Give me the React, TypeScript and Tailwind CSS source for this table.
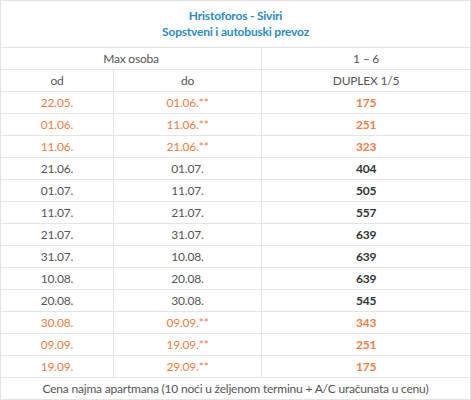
const rows: { od: string; doo: string; price: number; hot: boolean }[] = [
  { od: "22.05.", doo: "01.06.**", price: 175, hot: true },
  { od: "01.06.", doo: "11.06.**", price: 251, hot: true },
  { od: "11.06.", doo: "21.06.**", price: 323, hot: true },
  { od: "21.06.", doo: "01.07.", price: 404, hot: false },
  { od: "01.07.", doo: "11.07.", price: 505, hot: false },
  { od: "11.07.", doo: "21.07.", price: 557, hot: false },
  { od: "21.07.", doo: "31.07.", price: 639, hot: false },
  { od: "31.07.", doo: "10.08.", price: 639, hot: false },
  { od: "10.08.", doo: "20.08.", price: 639, hot: false },
  { od: "20.08.", doo: "30.08.", price: 545, hot: false },
  { od: "30.08.", doo: "09.09.**", price: 343, hot: true },
  { od: "09.09.", doo: "19.09.**", price: 251, hot: true },
  { od: "19.09.", doo: "29.09.**", price: 175, hot: true },
];

export default function App() {
  const cell = "border border-[#e4e4e4] h-[22px] p-0 text-center align-middle";

  return (
    <div className="bg-white font-['Lato','Liberation_Sans',sans-serif] text-[12px] tracking-[-0.2px] text-[#555555]">
      <table className="w-[470px] table-fixed border-collapse">
        <colgroup>
          <col className="w-[113px]" />
          <col className="w-[148px]" />
          <col className="w-[209px]" />
        </colgroup>
        <tbody>
          <tr>
            <td
              colSpan={3}
              className="h-[47px] border border-[#e4e4e4] p-0 text-center align-middle font-bold leading-[16px] text-[#2a8bc4]"
            >
              Hristoforos - Siviri
              <br />
              Sopstveni i autobuski prevoz
            </td>
          </tr>
          <tr>
            <td colSpan={2} className={cell}>
              Max osoba
            </td>
            <td className={cell}>1 – 6</td>
          </tr>
          <tr>
            <td className={cell}>od</td>
            <td className={cell}>do</td>
            <td className={cell}>DUPLEX 1/5</td>
          </tr>
          {rows.map((r, i) => (
            <tr key={i} className={r.hot ? "text-[#ee7d45]" : ""}>
              <td className={cell}>{r.od}</td>
              <td className={cell}>{r.doo}</td>
              <td className={`${cell} font-bold ${r.hot ? "" : "text-[#333333]"}`}>
                {r.price}
              </td>
            </tr>
          ))}
          <tr>
            <td colSpan={3} className={cell}>
              Cena najma apartmana (10 noći u željenom terminu + A/C uračunata u cenu)
            </td>
          </tr>
        </tbody>
      </table>
    </div>
  );
}
